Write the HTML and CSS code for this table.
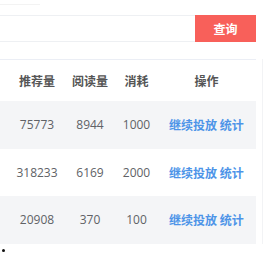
FILE: index.html
```html
<!DOCTYPE html>
<html lang="zh">
<head>
<meta charset="utf-8">
<link rel="stylesheet" href="styles.css">
</head>
<body>
<div class="page">
  <div class="topline"></div>
  <div class="search">
    <div class="input"></div>
    <button class="btn">查询</button>
  </div>
  <div class="table-wrap">
    <div class="table">
      <div class="row head">
        <div class="cell">推荐量</div>
        <div class="cell">阅读量</div>
        <div class="cell">消耗</div>
        <div class="cell">操作</div>
      </div>
      <div class="row stripe">
        <div class="cell">75773</div>
        <div class="cell">8944</div>
        <div class="cell">1000</div>
        <div class="cell ops"><a>继续投放</a> <a>统计</a></div>
      </div>
      <div class="row">
        <div class="cell">318233</div>
        <div class="cell">6169</div>
        <div class="cell">2000</div>
        <div class="cell ops"><a>继续投放</a> <a>统计</a></div>
      </div>
      <div class="row stripe">
        <div class="cell">20908</div>
        <div class="cell">370</div>
        <div class="cell">100</div>
        <div class="cell ops"><a>继续投放</a> <a>统计</a></div>
      </div>
    </div>
  </div>
  <div class="dot"></div>
</div>
</body>
</html>
```
FILE: styles.css
```css
html, body {
  margin: 0;
  padding: 0;
  background: #fff;
}
body {
  font-family: "Open Sans", "Noto Sans CJK SC", sans-serif;
  font-size: 12px;
  color: #606266;
}
.page {
  width: 274px;
  height: 253px;
  overflow: hidden;
}
.topline {
  width: 40px;
  height: 1px;
  margin-top: 4px;
  background: #f3f3f3;
}
.search {
  display: flex;
  margin-top: 10px;
  height: 27px;
  width: 256px;
}
.input {
  flex: 1;
  border: 1px solid #eef0f3;
  border-left: none;
  border-right: none;
}
.btn {
  width: 61px;
  height: 27px;
  border: none;
  background: #f8605a;
  color: #fff;
  font-family: "Noto Sans CJK SC", sans-serif;
  font-size: 12px;
  font-weight: bold;
  padding: 0;
  margin: 0;
}
.table-wrap {
  margin-top: 17px;
  width: 262px;
  border-right: 1px solid #f2f3f5;
}
.table {
  width: 256px;
  border-top: 1px solid #ebeef5;
}
.row {
  display: grid;
  grid-template-columns: 54px 52px 41px 99px;
  padding-left: 10px;
  height: 47.5px;
  align-items: center;
  justify-items: center;
}
.row.head {
  height: 41px;
  color: #555;
  font-weight: bold;
  font-family: "Noto Sans CJK SC", sans-serif;
}
.row.stripe {
  background: #f4f5f7;
}
.cell {
  white-space: nowrap;
}
.ops {
  font-family: "Noto Sans CJK SC", sans-serif;
  font-weight: bold;
  color: #4d94e8;
}
.dot {
  width: 3px;
  height: 3px;
  border-radius: 50%;
  background: #111;
  margin: 5px 0 0 2px;
}
```
